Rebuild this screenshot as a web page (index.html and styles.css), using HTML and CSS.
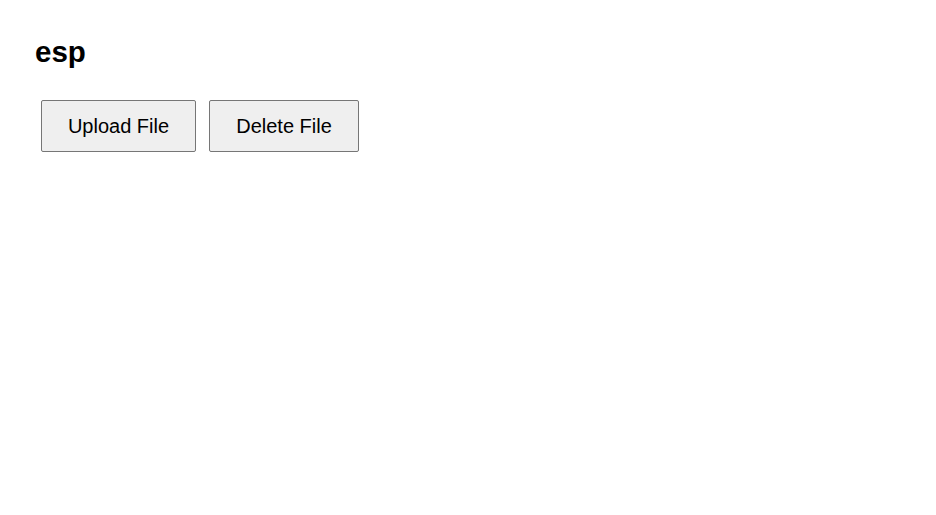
FILE: index.html
```html
<!DOCTYPE html>
<html>
<head>
<meta charset="utf-8">
<link rel="stylesheet" href="styles.css">
</head>
<body>
<div class="page">
  <h1 class="title">esp</h1>
  <div class="actions">
    <button class="btn btn-upload">Upload File</button>
    <button class="btn btn-delete">Delete File</button>
  </div>
</div>
</body>
</html>
```
FILE: styles.css
```css
html, body {
  margin: 0;
  padding: 0;
  background: #ffffff;
  font-family: "Liberation Sans", Arial, sans-serif;
}
.page {
  padding: 36px 35px;
}
.title {
  margin: 0;
  font-size: 29.5px;
  font-weight: bold;
  line-height: 32px;
  color: #000;
}
.actions {
  display: flex;
  gap: 13px;
  margin-top: 32px;
  padding-left: 6px;
}
.btn {
  box-sizing: border-box;
  height: 52px;
  background: #efefef;
  border: 1px solid #767676;
  border-radius: 2px;
  font-family: "Liberation Sans", Arial, sans-serif;
  font-size: 20px;
  color: #000;
  padding: 0;
}
.btn-upload { width: 155px; }
.btn-delete { width: 150px; }
```
